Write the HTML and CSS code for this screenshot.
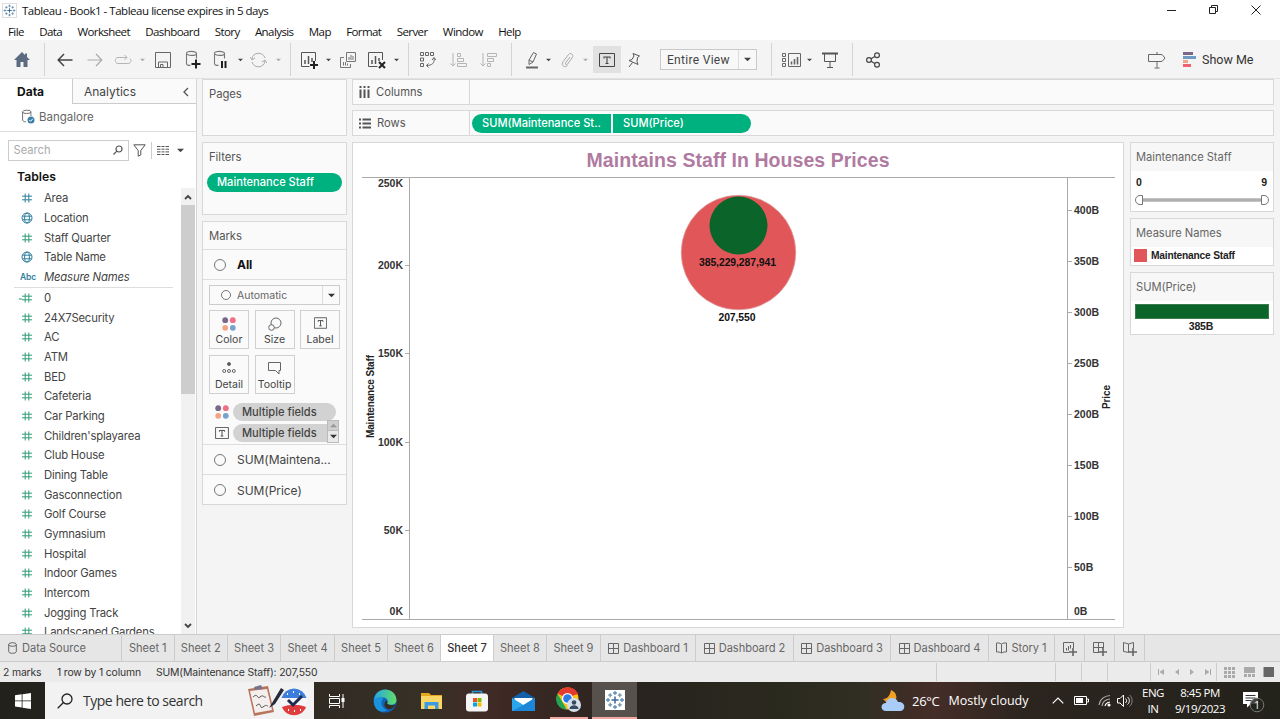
FILE: index.html
```html
<!DOCTYPE html>
<html lang="en">
<head>
<meta charset="utf-8">
<title>Tableau - Book1</title>
<link rel="stylesheet" href="styles.css">
</head>
<body>
<svg class="defs" aria-hidden="true">
  <symbol id="hash" viewBox="0 0 10 10"><path d="M3.2 .5v9M6.8 .5v9M0 3.2h10M0 6.8h10" fill="none" stroke="currentColor"/></symbol>
  <symbol id="globe" viewBox="0 0 12 12"><g fill="none" stroke="currentColor"><circle cx="6" cy="6" r="5"/><ellipse cx="6" cy="6" rx="2.4" ry="5"/><path d="M1.5 4.2h9M1.5 7.8h9"/></g></symbol>
  <symbol id="caret" viewBox="0 0 6 4"><path d="M0 .5h6L3 3.5z" fill="currentColor"/></symbol>
  <symbol id="db" viewBox="0 0 16 18"><g fill="none" stroke="currentColor" stroke-width="1.1"><ellipse cx="6.5" cy="3.4" rx="5" ry="2"/><path d="M1.5 3.4v10c0 1.2 2 2 4 2M11.5 3.4v5"/></g></symbol>
  <symbol id="tbox" viewBox="0 0 16 14"><path d="M.5 .5h15v13H.5z" fill="none" stroke="currentColor"/><path d="M5 5.5V4h6v1.5M8 4v6.5M6.5 10.5h3" fill="none" stroke="currentColor" stroke-width="1.1"/></symbol>
  <symbol id="dots" viewBox="0 0 14 14"><circle cx="3.2" cy="3.2" r="2.9" fill="#7b6888"/><circle cx="10.8" cy="3.2" r="2.9" fill="#ee6f86"/><circle cx="3.2" cy="10.8" r="2.9" fill="#f2a484"/><circle cx="10.8" cy="10.8" r="2.9" fill="#76a3cc"/></symbol>
  <symbol id="grid" viewBox="0 0 11 11"><path d="M.5 .5h10v10H.5zM5.5 .5v10M.5 5.5h10" fill="none" stroke="currentColor"/></symbol>
  <symbol id="book" viewBox="0 0 11 12"><path d="M5.5 2C4 1 2 .8.5 1v9c1.500-.2 3.500 0 5 1 1.500-1 3.500-1.200 5-1V1C9 .8 7 1 5.500 2zM5.500 2v9" fill="none" stroke="currentColor"/></symbol>
  <symbol id="logo" viewBox="0 0 20 20"><g fill="none" stroke-width="1.300"><path d="M10 6.500v7M6.500 10h7" stroke="#3d6796" stroke-width="1.500"/><path d="M10 1v4M8 3h4M10 15v4M8 17h4M1 10h4M3 8v4M15 10h4M17 8v4" stroke="#5c8db9"/><path d="M5.200 3.200v4M3.200 5.200h4M14.800 3.200v4M12.800 5.200h4M5.200 12.800v4M3.200 14.800h4M14.800 12.800v4M12.800 14.800h4" stroke="#7190aa"/></g></symbol>
</svg>

<header class="titlebar">
  <svg class="app-icon" width="15" height="15"><use href="#logo"/></svg>
  <span class="app-title">Tableau - Book1 - Tableau license expires in 5 days</span>
  <svg class="win-buttons" width="100" height="18" viewBox="0 0 100 18" fill="none" stroke="#222"><path d="M0 9.500h9" /><path d="M42.500 6.500h6v6h-6zM44.500 6.500v-2h6v6h-2"/><path d="M84.500 4.500l9 9M93.500 4.500l-9 9"/></svg>
</header>
<nav class="menu"><span>File</span><span>Data</span><span>Worksheet</span><span>Dashboard</span><span>Story</span><span>Analysis</span><span>Map</span><span>Format</span><span>Server</span><span>Window</span><span>Help</span></nav>

<div class="toolbar">
  <svg width="16" height="16" viewBox="0 0 16 16"><path d="M8 0L0 8h2.500v7H6.500v-5h3v5h4V8H16l-3-3V1.500h-2V3z" fill="#5d6b80"/></svg>
  <i class="sep"></i>
  <svg width="16" height="14" viewBox="0 0 16 14" fill="none" stroke="#444" stroke-width="1.500"><path d="M15.500 7H1.500M7 1L1.200 7 7 13"/></svg>
  <svg width="16" height="14" viewBox="0 0 16 14" fill="none" stroke="#aaa" stroke-width="1.200"><path d="M.5 7h14M9 1l5.800 6L9 13"/></svg>
  <svg width="18" height="12" viewBox="0 0 18 12" fill="none" stroke="#b5b5b5"><path d="M13 3.500H4C.5 3.500 .5 9.500 4 9.500h10c3.500 0 3.500-4 2-5M10.500 1L13 3.500 10.500 6"/></svg>
  <svg class="dim" width="5" height="4"><use href="#caret"/></svg>
  <svg width="16" height="16" viewBox="0 0 16 16" fill="none" stroke="#666"><path d="M.5 .5h15v15H.5zM3.500 15v-5h9v5M5.500 15v-2.500h2.500V15"/></svg>
  <svg class="mid" width="18" height="20" viewBox="0 0 18 20"><use href="#db" width="16" height="18" x="1"/><path d="M12 9.500v9M7.500 14h9" stroke="#222" stroke-width="2"/></svg>
  <svg class="mid" width="18" height="20" viewBox="0 0 18 20"><use href="#db" width="16" height="18" x="1"/><path d="M10 11v7M13.500 11v7" stroke="#222" stroke-width="2"/></svg>
  <svg width="5" height="4"><use href="#caret"/></svg>
  <svg width="17" height="16" viewBox="0 0 17 16" fill="none" stroke="#aaa"><path d="M2 7c.5-7 11-8 13-1M15 9c-.5 7-11 8-13 1M0 5l2 3 3-2M17 11l-2-3-3 2"/></svg>
  <svg class="dim" width="5" height="4"><use href="#caret"/></svg>
  <i class="sep"></i>
  <svg width="18" height="18" viewBox="0 0 18 18" fill="none" stroke="#555"><path d="M9.500 15.500H1.500V1.500h14V10"/><path d="M5 13V9M8.500 13V5M12 11V7" stroke-width="1.500"/><path d="M14 10v8M10 14h8" stroke="#222" stroke-width="2"/></svg>
  <svg width="5" height="4"><use href="#caret"/></svg>
  <svg width="18" height="18" viewBox="0 0 18 18" fill="none" stroke="#777"><path d="M7.500 1.500h9v9h-9zM5 6.500H1.500v10h10V13M10 9V6M12 9V4M14 9V5M4.500 14.500V11M6.500 14.500V11M8.500 14.500V12.500"/></svg>
  <svg width="18" height="18" viewBox="0 0 18 18" fill="none" stroke="#555"><path d="M9.500 15.500H.5V1.500h14V9"/><path d="M4 13V9M7.500 13V5M11 10V7" stroke-width="1.500"/><path d="M11 11l6 6M17 11l-6 6" stroke="#222" stroke-width="2"/></svg>
  <svg width="5" height="4"><use href="#caret"/></svg>
  <i class="sep"></i>
  <svg width="16" height="16" viewBox="0 0 16 16" fill="none" stroke="#666"><path d="M.5 .5h3v3h-3zM5.500 .5h3v3h-3zM10.500 .5h3v3h-3zM.5 6h3v3h-3zM.5 11.500h3v3h-3zM14 6c1 5-2 7.500-7.500 7.500M12 8l2-2.500L16 8M8.500 11.500l-2 2 2 2"/></svg>
  <svg width="18" height="16" viewBox="0 0 18 16" fill="none" stroke="#b5b5b5"><path d="M3 1v13M.5 11.500L3 14l2.500-2.500M7.500 1.500h3v3h-3zM7.500 6.500h6v3h-6zM7.500 11.500h9v3h-9z"/></svg>
  <svg width="18" height="16" viewBox="0 0 18 16" fill="none" stroke="#b5b5b5"><path d="M3 1v13M.5 11.500L3 14l2.500-2.500M7.500 1.500h9v3h-9zM7.500 6.500h6v3h-6zM7.500 11.500h3v3h-3z"/></svg>
  <i class="sep"></i>
  <svg width="14" height="18" viewBox="0 0 14 18" fill="none" stroke="#666"><path d="M4 9L8.500 1.500l3 1.500L8 11l-4 2.500zM4 9l4 2"/><path d="M1 16.500h12" stroke-width="2"/></svg>
  <svg width="5" height="4"><use href="#caret"/></svg>
  <svg width="13" height="16" viewBox="0 0 13 16" fill="none" stroke="#aaa"><path d="M9 5l-4.500 6c-.8 1.500 1 2.500 2 1.200l4.800-6.700C13 2.500 9.500 0 7.500 2.500L2 9.800C-.5 13.500 4 16.500 6.500 13.500"/></svg>
  <svg class="dim" width="5" height="4"><use href="#caret"/></svg>
  <span class="pressed"><svg width="16" height="14"><use href="#tbox"/></svg></span>
  <svg width="14" height="16" viewBox="0 0 14 16" fill="none" stroke="#555"><path d="M6 1.500l6.500 2.500-2 1.500-.5 4 1 3L2 8.500l3-1L7 4zM5.500 10.500L2 15"/></svg>
  <span class="fit-select"><span>Entire View</span><i></i><svg width="7" height="5"><use href="#caret"/></svg></span>
  <i class="sep"></i>
  <i></i>
  <svg width="20" height="16" viewBox="0 0 20 16" fill="none" stroke="#666"><path d="M.5 1.500h3v3h-3zM.5 6.500h3v3h-3zM.5 11.500h3v3h-3zM6.500 1.500h12v13h-12z"/><path d="M9.500 12.500v-3M12.500 12.500V7M15.500 12.500V5" stroke-width="1.600"/></svg>
  <svg width="5" height="4"><use href="#caret"/></svg>
  <svg width="16" height="16" viewBox="0 0 16 16" fill="none" stroke="#555"><path d="M0 1.500h16" stroke-width="2"/><path d="M2.500 2v7.500h11V2M8 9.500v5.500M5 15.500h6"/></svg>
  <i class="sep"></i>
  <svg width="14" height="16" viewBox="0 0 14 16" fill="none" stroke="#444" stroke-width="1.200"><circle cx="3" cy="8" r="2.400"/><circle cx="11" cy="3.200" r="2.400"/><circle cx="11" cy="12.800" r="2.400"/><path d="M5 6.800l3.800-2.400M5 9.200l3.800 2.400"/></svg>
  <i></i>
  <svg width="18" height="18" viewBox="0 0 18 18" fill="none" stroke="#666"><path d="M.5 3.500H14l3 3.500-3 3.500H.5zM9 1v2.500M9 10.500v6M6.500 17h5"/></svg>
  <span class="show-me"><svg width="14" height="15" viewBox="0 0 14 15"><path d="M0 0h10v3H0z" fill="#7b6888"/><path d="M0 4h13v3H0z" fill="#6f9bc4"/><path d="M0 8h5v3H0z" fill="#f2a484"/><path d="M0 12h8v3H0z" fill="#f0616d"/></svg><span>Show Me</span></span>
</div>

<main class="workspace">
  <aside class="data-pane">
    <div class="pane-tabs"><b>Data</b><span>Analytics</span><svg width="6" height="10" viewBox="0 0 6 10" fill="none" stroke="#555" stroke-width="1.300"><path d="M5 1L1 5l4 4"/></svg></div>
    <div class="source"><svg width="16" height="16" viewBox="0 0 16 16"><use href="#db" width="14" height="15"/><circle cx="10" cy="11" r="3.500" fill="#3b7ea6"/><path d="M8.300 11l1.300 1.300 2.200-2.600" fill="none" stroke="#fff"/></svg><span>Bangalore</span></div>
    <div class="find">
      <span class="search"><span>Search</span><svg width="10" height="10" viewBox="0 0 10 10" fill="none" stroke="#555" stroke-width="1.200"><circle cx="6" cy="4" r="3"/><path d="M3.800 6.200L.5 9.500"/></svg></span>
      <svg width="13" height="13" viewBox="0 0 13 13" fill="none" stroke="#555"><path d="M.8 .8h11.400L7.800 6.500v4.500l-2.600 1.200V6.500z"/></svg>
      <i></i>
      <svg width="12" height="9" viewBox="0 0 12 9" stroke="#555"><path d="M0 .5h12M0 3.200h12M0 5.900h12M0 8.500h12" stroke-dasharray="3.500 1 3 1 3.500 0"/></svg>
      <svg width="7" height="5"><use href="#caret"/></svg>
    </div>
    <h2>Tables</h2>
    <div class="fields">
      <ul>
        <li class="dim-f"><svg><use href="#hash"/></svg>Area</li>
        <li class="dim-f geo"><svg><use href="#globe"/></svg>Location</li>
        <li><svg><use href="#hash"/></svg>Staff Quarter</li>
        <li class="dim-f geo"><svg><use href="#globe"/></svg>Table Name</li>
        <li class="names"><b>Abc</b><em>Measure Names</em></li>
        <li class="calc"><svg><use href="#hash"/></svg>0</li>
        <li><svg><use href="#hash"/></svg>24X7Security</li>
        <li><svg><use href="#hash"/></svg>AC</li>
        <li><svg><use href="#hash"/></svg>ATM</li>
        <li><svg><use href="#hash"/></svg>BED</li>
        <li><svg><use href="#hash"/></svg>Cafeteria</li>
        <li><svg><use href="#hash"/></svg>Car Parking</li>
        <li><svg><use href="#hash"/></svg>Children'splayarea</li>
        <li><svg><use href="#hash"/></svg>Club House</li>
        <li><svg><use href="#hash"/></svg>Dining Table</li>
        <li><svg><use href="#hash"/></svg>Gasconnection</li>
        <li><svg><use href="#hash"/></svg>Golf Course</li>
        <li><svg><use href="#hash"/></svg>Gymnasium</li>
        <li><svg><use href="#hash"/></svg>Hospital</li>
        <li><svg><use href="#hash"/></svg>Indoor Games</li>
        <li><svg><use href="#hash"/></svg>Intercom</li>
        <li><svg><use href="#hash"/></svg>Jogging Track</li>
        <li><svg><use href="#hash"/></svg>Landscaped Gardens</li>
      </ul>
      <div class="scroll"><svg width="8" height="6" viewBox="0 0 8 6" fill="none" stroke="#444" stroke-width="1.800"><path d="M1 5l3-3 3 3"/></svg><i></i><svg width="8" height="6" viewBox="0 0 8 6" fill="none" stroke="#444" stroke-width="1.800"><path d="M1 1l3 3 3-3"/></svg></div>
    </div>
  </aside>

  <section class="cards">
    <div class="card pages"><h3>Pages</h3></div>
    <div class="card filters"><h3>Filters</h3><span class="pill">Maintenance Staff</span></div>
    <div class="card marks">
      <h3>Marks</h3>
      <div class="mark-row all"><i class="ring"></i><b>All</b></div>
      <div class="mark-body">
        <div class="mark-type"><i class="ring small"></i><span>Automatic</span><i class="drop"><svg width="7" height="5"><use href="#caret"/></svg></i></div>
        <div class="encodings">
          <div><svg width="14" height="14"><use href="#dots"/></svg><span>Color</span></div>
          <div><svg width="14" height="14" viewBox="0 0 14 14" fill="none" stroke="#666"><circle cx="8" cy="6" r="5"/><circle cx="3.500" cy="10.500" r="2.800" fill="#fafafa"/></svg><span>Size</span></div>
          <div><svg width="13" height="12"><use href="#tbox"/></svg><span>Label</span></div>
          <div><svg width="14" height="12" viewBox="0 0 14 12" fill="none" stroke="#666"><circle cx="7" cy="2" r="1.500" fill="#555"/><circle cx="2.200" cy="9" r="1.500"/><circle cx="7" cy="9" r="1.500"/><circle cx="11.800" cy="9" r="1.500"/></svg><span>Detail</span></div>
          <div><svg width="14" height="13" viewBox="0 0 14 13" fill="none" stroke="#666"><path d="M.5 .5h12v8h-1.500v3.500L7.500 8.500h-7z"/></svg><span>Tooltip</span></div>
        </div>
        <div class="used"><svg width="14" height="14"><use href="#dots"/></svg><span>Multiple fields</span></div>
        <div class="used"><svg width="13" height="12"><use href="#tbox"/></svg><span>Multiple fields</span>
          <div class="stepper"><i><svg width="7" height="5" viewBox="0 0 6 4"><path d="M0 3.500h6L3 .5z" fill="#999"/></svg></i><i><svg width="7" height="5"><use href="#caret"/></svg></i></div></div>
      </div>
      <div class="mark-row"><i class="ring"></i><span>SUM(Maintena...</span></div>
      <div class="mark-row"><i class="ring"></i><span>SUM(Price)</span></div>
    </div>
  </section>

  <section class="view">
    <div class="shelf"><label><svg width="11" height="12" viewBox="0 0 11 12" stroke="#555" stroke-width="2"><path d="M1.500 0v2M5.500 0v2M9.500 0v2M1.500 3.500V12M5.500 3.500V12M9.500 3.500V12"/></svg>Columns</label></div>
    <div class="shelf rows"><label><svg width="12" height="11" viewBox="0 0 12 11" stroke="#555" stroke-width="2"><path d="M0 1.500h2M0 5.500h2M0 9.500h2M3.500 1.500H12M3.500 5.500H12M3.500 9.500H12"/></svg>Rows</label><span class="pill first">SUM(Maintenance St..</span><span class="pill last">SUM(Price)</span></div>
    <div class="stage">
      <svg class="viz" width="772" height="486" viewBox="352 142 772 486">
        <text class="viz-title" x="738" y="167" text-anchor="middle" textLength="303">Maintains Staff In Houses Prices</text>
        <path d="M362 177.500H1115M362 619.500H1115M409.500 178v441M1067.500 178v441" stroke="#aaa"/>
        <path d="M405 265.500h5M405 353.500h5M405 442.500h5M405 530.500h5M1067 210.500h5M1067 261.500h5M1067 312.500h5M1067 363.500h5M1067 414.500h5M1067 465.500h5M1067 516.500h5M1067 567.500h5" stroke="#aaa"/>
        <g class="tick" text-anchor="end"><text x="403" y="187">250K</text><text x="403" y="269">200K</text><text x="403" y="357">150K</text><text x="403" y="446">100K</text><text x="403" y="534">50K</text><text x="403" y="615">0K</text></g>
        <g class="tick"><text x="1074" y="214">400B</text><text x="1074" y="265">350B</text><text x="1074" y="316">300B</text><text x="1074" y="367">250B</text><text x="1074" y="418">200B</text><text x="1074" y="469">150B</text><text x="1074" y="520">100B</text><text x="1074" y="571">50B</text><text x="1074" y="615">0B</text></g>
        <text class="axis" text-anchor="middle" transform="translate(374 396.500) rotate(-90)" textLength="83">Maintenance Staff</text>
        <text class="axis" text-anchor="middle" transform="translate(1109.500 397) rotate(-90)" textLength="24">Price</text>
        <circle cx="738.500" cy="252.500" r="57.300" fill="#e15759" stroke="#dba5a5" stroke-width=".7"/>
        <circle cx="738.500" cy="225.500" r="29" fill="#0b652b"/>
        <text class="mark" x="737.500" y="266" text-anchor="middle" textLength="77">385,229,287,941</text>
        <text class="mark" x="737" y="321" text-anchor="middle" textLength="37">207,550</text>
      </svg>
      <div class="legends">
        <div class="card range"><h3>Maintenance Staff</h3><div class="ends"><b>0</b><b>9</b></div>
          <svg width="136" height="12" viewBox="0 0 136 12"><path d="M8 6h119" stroke="#b0b0b0" stroke-width="3.500"/><path d="M8.500 1.500v9H6c-6 0-6-9 0-9zM127.500 1.500v9h2.500c6 0 6-9 0-9z" fill="#fff" stroke="#777"/></svg></div>
        <div class="card names-legend"><h3>Measure Names</h3><div class="key"><i></i><b>Maintenance Staff</b></div></div>
        <div class="card ramp"><h3>SUM(Price)</h3><i></i><b>385B</b></div>
      </div>
    </div>
  </section>
</main>

<nav class="sheets">
  <span class="ds"><svg width="9" height="12" viewBox="0 0 9 12" fill="none" stroke="currentColor"><ellipse cx="4.500" cy="2.500" rx="3.800" ry="1.800"/><path d="M.7 2.500v7c0 2.400 7.600 2.400 7.600 0v-7"/></svg>Data Source</span>
  <span>Sheet 1</span><span>Sheet 2</span><span>Sheet 3</span><span>Sheet 4</span><span>Sheet 5</span><span>Sheet 6</span><span class="active">Sheet 7</span><span>Sheet 8</span><span>Sheet 9</span>
  <span><svg width="11" height="11"><use href="#grid"/></svg>Dashboard 1</span><span><svg width="11" height="11"><use href="#grid"/></svg>Dashboard 2</span><span><svg width="11" height="11"><use href="#grid"/></svg>Dashboard 3</span><span><svg width="11" height="11"><use href="#grid"/></svg>Dashboard 4</span>
  <span><svg width="11" height="12"><use href="#book"/></svg>Story 1</span>
  <span><svg width="15" height="15" viewBox="0 0 15 15" fill="none" stroke="#666"><path d="M7 11.500H1.500v-10h10V7M4.500 9.500V7M6.500 9.500V5M8.500 7.500V4"/><path d="M11 7v8M7 11h8" stroke-width="1.600"/></svg></span>
  <span><svg width="15" height="15" viewBox="0 0 15 15" fill="none" stroke="#666"><path d="M7 11.500H1.500v-10h10V7M6.500 1.500v10M1.500 6.500h10"/><path d="M11 7v8M7 11h8" stroke-width="1.600"/></svg></span>
  <span><svg width="15" height="15" viewBox="0 0 15 15" fill="none" stroke="#666"><path d="M7 11.500L1.500 10.500v-9L6.500 3l5-1.500V7M6.500 3v8"/><path d="M11 7v8M7 11h8" stroke-width="1.600"/></svg></span>
  <i></i>
</nav>
<div class="status">
  <span class="s1">2 marks</span><span class="s2">1 row by 1 column</span><span class="s3">SUM(Maintenance Staff): 207,550</span>
  <i></i><i></i><i></i><i></i>
  <span class="nav-arrows"><svg width="54" height="8" viewBox="0 0 54 8" fill="#aaa"><path d="M0 1h1v6H0zM6 1v6L1.500 4zM21 1v6l-4-3zM32 1v6l4-3zM47 1v6l4.500-3zM52 1h1v6h-1z"/></svg></span>
  <svg width="52" height="11" viewBox="0 0 52 11"><path d="M0 1.500h11M0 5.500h11M0 9.500h11" stroke="#aaa" stroke-width="3" stroke-dasharray="3 1"/><path d="M20 0h11v6H20z" fill="#aaa"/><path d="M20 8.500h11" stroke="#aaa" stroke-width="3" stroke-dasharray="3 1"/><path d="M39.500 0h10.500v10H39.500z" fill="#666"/></svg>
</div>

<footer class="taskbar">
  <span class="start"><svg width="16" height="16" viewBox="0 0 16 16" fill="#fff"><path d="M0 2.200L6.700 1.300v6.200H0zM7.500 1.200L16 0v7.500H7.500zM0 8.300h6.700v6.200L0 13.600zM7.500 8.300H16V16l-8.500-1.200z"/></svg></span>
  <div class="find-box"><svg width="16" height="16" viewBox="0 0 16 16" fill="none" stroke="#222" stroke-width="1.300"><circle cx="10" cy="6" r="5"/><path d="M6.500 9.500L.7 15.300"/></svg><span>Type here to search</span>
    <svg class="doodle" width="62" height="36" viewBox="0 0 62 36"><path d="M1 6l20-3 6 26-20 4z" fill="#b9755c"/><path d="M3 8l17-2 5 21-17 3z" fill="#f4efed"/><path d="M7 4l7-2 2 4-8 1z" fill="#77758d"/><path d="M6 14c5-5 4 3 7 0s4 1 6 0M9 23c6-6 3 4 7 1s3-1 5-1" fill="none" stroke="#555"/><path d="M22 25l3-5L34 5l3 2-9 14z" fill="#272a38"/><circle cx="47" cy="19" r="13" fill="#f5f5fa"/><path d="M34.500 15a13 13 0 0 1 25 0z" fill="#3d7edc"/><path d="M35 24c8-3 16-3 24 0-4 11-20 11-24 0z" fill="#df3c3e"/><path d="M41 17l5 5 9-9" fill="none" stroke="#202b50" stroke-width="3"/><path d="M40 11h1M46 9h1M52 11h1M41 27h1M47 28h1M53 27h1" stroke="#fff" stroke-width="2"/></svg>
  </div>
  <span><svg width="16" height="16" viewBox="0 0 16 16" fill="none" stroke="#fff"><path d="M.5 1v2.500h10V1M.5 15v-2.500h10V15M.5 5.500h10v5H.5zM14 1v14"/><path d="M14 5v4" stroke-width="3"/></svg></span>
  <span><svg width="24" height="24" viewBox="0 0 24 24"><defs><linearGradient id="e1" x1="0" x2="1"><stop stop-color="#26a7e3"/><stop offset="1" stop-color="#62dc69"/></linearGradient></defs><circle cx="12" cy="12" r="11.500" fill="#1263b5"/><path d="M1 11C3-4 23-2 23.500 11c0 6-8 5.500-9.500 3.500 2-2 0-6-4-6S3 9 1 11z" fill="url(#e1)"/><path d="M1 11c3-4 9-3 9-1-3 3-2 9 4 11-8 5-14-3-13-10z" fill="#1b93dc"/><path d="M14 14.500c2 2 6.500 2 8.500 1-2 5-8 6-10 3s-1-5 1-7c1 1 1 2 .5 3z" fill="#322e27"/></svg></span>
  <span><svg width="21" height="18" viewBox="0 0 21 18"><path d="M0 1h8l2 2h11v14H0z" fill="#e5a91b"/><path d="M0 4h21v13H0z" fill="#fbd566"/><path d="M3.500 10h14v7h-3.500v-3.500H7V17H3.500z" fill="#3b9be0"/></svg></span>
  <span><svg width="22" height="24" viewBox="0 0 22 24"><path d="M6.500 6V2.500h9V6" fill="none" stroke="#2996d8" stroke-width="1.500"/><rect y="4.500" width="22" height="18" rx="3" fill="#f5f5f5"/><path d="M7 9h4v4H7z" fill="#f25022"/><path d="M11.500 9h4v4h-4z" fill="#7fba00"/><path d="M7 13.500h4v4H7z" fill="#00a4ef"/><path d="M11.500 13.500h4v4h-4z" fill="#ffb900"/></svg></span>
  <span><svg width="23" height="22" viewBox="0 0 23 22"><path d="M0 8l11.500-7L23 8v13H0z" fill="#1260a8"/><path d="M2.500 8h18v7h-18z" fill="#fff"/><path d="M0 8l11.500 7L23 8v13H0z" fill="#2aa6ec"/><path d="M0 21l11.500-6L23 8v13z" fill="#1c86d8"/></svg></span>
  <span class="open"><svg width="25" height="25" viewBox="0 0 25 25"><circle cx="11.500" cy="11.500" r="11" fill="#fbc116"/><path d="M11.500 11.500L1.500 6.500C6-2 18-2 21.500 6.500z" fill="#e33b2e"/><path d="M1.500 6.500L9 19.500l1.500 3C1 22-1.500 13 1.500 6.500z" fill="#23a455"/><path d="M11.500 6.500h10.300" stroke="#e33b2e" stroke-width="2"/><circle cx="11.500" cy="11.500" r="5.500" fill="#fff"/><circle cx="11.500" cy="11.500" r="4.300" fill="#2e79e7"/><circle cx="18" cy="18" r="7" fill="#d5dfea"/><circle cx="18" cy="15.500" r="2.300" fill="#394960"/><path d="M13.500 22c0-5 9-5 9 0z" fill="#394960"/></svg></span>
  <span class="open current"><svg class="tile" width="20" height="20"><use href="#logo"/></svg></span>
  <i></i>
  <span class="weather"><svg width="24" height="22" viewBox="0 0 24 22"><path d="M2 9c4 0 7-3 8-9 5 2 7 7 4 12H5z" fill="#f2a022"/><path d="M5 21c-6 0-6-8 0-8 1-6 10-7 12-1 8-1 8 9 2 9z" fill="#a9cdf8"/></svg><span class="deg">26°C</span><span class="sky">Mostly cloudy</span></span>
  <svg width="12" height="7" viewBox="0 0 12 7" fill="none" stroke="#fff" stroke-width="1.200"><path d="M.7 6.300L6 1l5.300 5.300"/></svg>
  <svg width="15" height="10" viewBox="0 0 15 10"><path d="M.5 .5h12v8H.5zM13 3h1.500v3H13" fill="none" stroke="#fff"/><path d="M2 2h7v5H2z" fill="#fff"/></svg>
  <svg width="13" height="13" viewBox="0 0 13 13" fill="none" stroke="#aaa" stroke-width="1.200"><path d="M1 11C2 5 6 2 12 1.500M4 12c.5-4 3-6.500 8-7"/><path d="M7 12c.5-2 2-3.500 5-4" stroke="#fff"/><circle cx="11" cy="11" r="1" fill="#fff" stroke="#fff"/></svg>
  <svg width="16" height="14" viewBox="0 0 16 14" fill="none" stroke="#fff"><path d="M.5 4.500h2.500L6.500 1v11.500L3 9H.5zM8.500 4.500c1.500 1.500 1.500 3 0 4.500M10.500 3c2.500 2 2.500 5.500 0 7.500"/><path d="M12.500 1c3.500 3 3.500 8.500 0 11.500" stroke="#888"/></svg>
  <span class="lang">ENG<br>IN</span>
  <span class="clock">8:45 PM<br>9/19/2023</span>
  <svg class="note" width="24" height="24" viewBox="0 0 24 24"><path d="M1 3h15v12h-7l-4 3.500V15H1z" fill="#fff"/><path d="M3.500 6.500h10M3.500 9h10M3.500 11.500h6" stroke="#333"/><circle cx="15" cy="16" r="6.800" fill="#25241f" fill-opacity=".85" stroke="#777"/><text x="15" y="20" text-anchor="middle" fill="#fff" font-size="10.500">1</text></svg>
</footer>
</body>
</html>
```
FILE: styles.css
```css
* { box-sizing: border-box; }
body { margin: 0; width: 1280px; height: 719px; overflow: hidden; display: flex; flex-direction: column; background: #f4f4f4; color: #444; font: 11.5px Inter, "Open Sans", sans-serif; white-space: nowrap; }
h2, h3 { margin: 0; font-weight: 400; }
ul { margin: 0; padding: 0; list-style: none; }
svg { flex: none; display: block; }
.defs { position: absolute; width: 0; height: 0; }

.titlebar { height: 22px; flex: none; background: #fff; color: #111; display: flex; align-items: center; padding: 0 0 2px 2px; font: 11.5px "Open Sans", sans-serif; }
.app-icon { border: 1px solid #ddd; }
.app-title { margin-left: 5px; letter-spacing: -.47px; }
.win-buttons { margin-left: auto; margin-right: 13px; }
.menu { height: 18px; flex: none; background: #fff; color: #111; display: flex; gap: 15.300px; padding-left: 8px; font: 11.5px/19px "Open Sans", sans-serif; letter-spacing: -.58px; }

.toolbar { height: 39px; flex: none; display: grid; align-items: center; justify-items: center; padding-top: 1px; color: #444; border-bottom: 1px solid #e2e2e2;
  grid-template-columns: 44px 1px 40px 20px 36px 2px 40px 20px 36px 2px 34px 6px 18px 20px 18px 22px 36px 2px 22px 18px 44px 16px 28px 14px 18px 20px 17px 26px 28px 121px 4px 4px 30px 4px 38px 6px 36px 256px 20px 113px; }
.sep { width: 1px; height: 33px; background: #d4d4d4; }
.dim { color: #aaa; }
.mid { color: #777; }
.pressed { width: 28px; height: 27px; background: #e1e1e1; display: grid; place-items: center; }
.fit-select { width: 97px; height: 21px; border: 1px solid #c9c9c9; background: #f8f8f8; display: flex; align-items: center; padding: 0 5px 0 6px; font: 12px Roboto, sans-serif; letter-spacing: .3px; }
.fit-select i { width: 1px; height: 19px; background: #ddd; margin-left: auto; margin-right: 5px; }
.show-me { justify-self: start; padding-left: 16px; display: flex; gap: 5px; align-items: center; font: 12.500px Roboto, sans-serif; color: #333; }

.workspace { height: 555px; flex: none; display: flex; }
.data-pane { width: 197px; background: #fff; border-right: 1px solid #d4d4d4; display: flex; flex-direction: column; }
.pane-tabs { height: 25px; flex: none; display: flex; align-items: center; color: #444; }
.pane-tabs b { width: 72px; padding-left: 17px; color: #111; font-size: 12px; }
.pane-tabs span { width: 124px; align-self: stretch; border-left: 1px solid #ccc; border-bottom: 1px solid #ccc; padding-left: 11px; line-height: 25px; font-size: 12px; background: #fafafa; }
.pane-tabs svg { margin-left: -13px; }
.source { height: 28px; flex: none; border-bottom: 1px solid #ddd; display: flex; align-items: center; gap: 2px; padding: 0 0 1px 21px; color: #666; font-size: 11.500px; }
.find { height: 35px; flex: none; display: flex; align-items: center; padding: 1px 0 0 7.500px; }
.search { width: 121px; height: 21px; border: 1px solid #ccc; display: flex; justify-content: space-between; align-items: center; padding: 0 5px; color: #aaa; margin-right: 4px; font-size: 11.200px; }
.find i { width: 1px; height: 17px; background: #ccc; margin: 0 5px 0 5px; }
.find svg + svg { margin-left: 8px; }
.data-pane h2 { height: 21px; flex: none; padding-left: 17px; font-size: 12.200px; font-weight: 600; line-height: 20px; color: #111; }
.fields { flex: 1; min-height: 0; display: flex; justify-content: space-between; overflow: hidden; }
.fields li { height: 19.680px; display: flex; align-items: center; padding: 1px 0 0 22px; color: #444; font-size: 11.300px; letter-spacing: -.18px; }
.fields svg { width: 10px; height: 10px; }
.fields li > svg { color: #2f9c78; margin-right: 12px; }
.fields .dim-f > svg { color: #2f7f9e; }
.fields .geo > svg { width: 12px; height: 12px; margin: 0 11px 0 -1px; }
.fields .names { height: 21px; width: 159px; margin-left: 14px; border-bottom: 1px solid #ddd; padding-left: 6px; }
.names b { width: 24px; font-size: 8.500px; color: #2f7f9e; font-weight: 600; }
.fields .calc::before { content: "="; margin-left: -4px; width: 4px; font-size: 7px; color: #2f9c78; }
.scroll { width: 14px; background: #f1f1f1; display: flex; flex-direction: column; align-items: center; padding: 6px 0 5px; margin-right: 1px; }
.scroll i { width: 14px; height: 189px; background: #cdcdcd; margin: 5px 0 auto; }
.scroll svg { width: 8px; height: 6px; }

.cards { width: 145px; margin-left: 5px; display: flex; flex-direction: column; gap: 6px; }
.card { background: #fafafa; border: 1px solid #d8d8d8; }
.card h3 { color: #555; font-size: 11.300px; line-height: 14px; padding: 7px 0 0 6px; letter-spacing: -.05px; }
.pages { height: 57px; }
.filters { height: 73px; }
.pill { display: block; background: #00b180; color: #fff; height: 19px; line-height: 19px; border-radius: 10px; padding-left: 10px; font-weight: 500; font-size: 11.100px; }
.filters .pill { margin: 9px 4px 0; }
.marks { height: 284px; }
.marks h3 { height: 28px; border-bottom: 1px solid #ddd; }
.mark-row { height: 30px; display: flex; align-items: center; padding-left: 11px; font-size: 12px; color: #444; border-bottom: 1px solid #ddd; letter-spacing: -.05px; }
.mark-row:last-child { border: 0; }
.mark-row b { color: #111; }
.ring { width: 12px; height: 12px; border: 1.500px solid #777; border-radius: 50%; margin-right: 11px; }
.ring.small { width: 10px; height: 10px; margin-right: 6px; border: 1px solid #777; }
.mark-body { height: 165px; padding: 5px 6px 0; border-bottom: 1px solid #ddd; }
.mark-type { height: 20px; border: 1px solid #ccc; display: flex; align-items: center; padding-left: 11px; font-size: 10.500px; color: #666; }
.drop { margin-left: auto; width: 17px; height: 18px; border-left: 1px solid #ddd; display: grid; place-items: center; color: #333; }
.encodings { display: grid; grid-template-columns: repeat(3, 40px); gap: 6px 5.500px; margin-top: 5px; }
.encodings div { height: 39px; border: 1px solid #d0d0d0; display: flex; flex-direction: column; align-items: center; justify-content: space-between; padding: 6px 0 1px; font-size: 10.500px; line-height: 14px; }
.used { height: 21.500px; display: flex; align-items: center; padding-left: 6px; gap: 4px; position: relative; }
.encodings + .used { margin-top: 7px; }
.used > svg { width: 14px; }
.used > span { width: 103px; height: 18px; border-radius: 9px; background: #d2d2d2; padding-left: 9px; line-height: 18px; font-size: 11.100px; font-weight: 500; }
.stepper { position: absolute; right: 1px; top: -3px; width: 12px; height: 23px; background: #e9e9e9; border: 1px solid #bbb; display: grid; grid-template-rows: 1fr 1fr; color: #333; }
.stepper i { display: grid; place-items: center; }
.stepper i:first-child { background: #cfcfcf; border-bottom: 1px solid #bbb; }

.view { width: 922px; margin-left: 5px; display: flex; flex-direction: column; }
.shelf { height: 26px; flex: none; border: 1px solid #d8d8d8; background: #fafafa; display: flex; align-items: center; margin-bottom: 5px; }
.shelf label { width: 117px; height: 24px; border-right: 1px solid #d8d8d8; padding-left: 6px; display: flex; align-items: center; gap: 6px; color: #555; font-size: 11.200px; }
.shelf.rows { height: 26px; margin-bottom: 6px; }
.shelf .first { width: 139px; margin-left: 2px; border-radius: 10px 0 0 10px; }
.shelf .last { width: 138px; margin-left: 2px; border-radius: 0 10px 10px 0; }
.stage { display: flex; gap: 6px; }
.viz { background: #fff; outline: 1px solid #d8d8d8; outline-offset: -1px; font-family: "Liberation Sans", sans-serif; font-weight: 700; }
.viz-title { font-size: 19.500px; fill: #b07aa1; }
.tick { font-size: 10.500px; fill: #333; }
.axis { font-size: 10px; fill: #222; }
.mark { font-size: 10.400px; fill: #111; }
.legends { width: 144px; display: flex; flex-direction: column; gap: 6px; font: 700 10.500px "Liberation Sans", sans-serif; color: #222; }
.legends .card { background: #fff; }
.legends h3 { height: 28px; background: #f7f7f7; font-family: Inter, sans-serif; color: #666; font-size: 11.200px; padding-left: 5px; }
.range { height: 70px; }
.ends { display: flex; justify-content: space-between; padding: 5px 6px 0 5px; line-height: 12px; }
.range svg { margin: 6px 0 0 3px; }
.names-legend { height: 48px; }
.key { display: flex; align-items: center; gap: 4px; padding: 2px 3px; font-size: 10.200px; letter-spacing: -.2px; }
.key i { width: 13px; height: 13px; background: #e15759; }
.ramp { height: 63px; }
.ramp i { display: block; height: 15px; margin: 3px 4px 4px; background: #0b652b; border: 1px solid #3b7b50; }
.ramp b { display: block; text-align: center; margin-top: -3px; line-height: 12px; letter-spacing: -.2px; padding-right: 2px; }

.sheets { height: 28px; flex: none; border-top: 1px solid #ccc; border-bottom: 1px solid #ccc; background: #e6e6e6; color: #666; display: grid; grid-template-columns: 122px 52.500px 53.500px 53px 54px 53px 53px 53px 53px 54px 95px 98px 97px 98px 66px 30px 30px 30px 1fr; font-size: 11.100px; letter-spacing: -.05px; }
.sheets span { border-right: 1px solid #ccc; display: flex; align-items: center; justify-content: center; gap: 4px; }
.sheets .ds { justify-content: flex-start; padding-left: 8px; gap: 5px; }
.sheets .active { background: #fff; color: #333; font-weight: 500; }
.status { height: 20px; flex: none; background: #ebebeb; display: grid; grid-template-columns: 54px 99px 783px 119px 26px 26px 43px 0 67px 1fr; align-items: center; font-size: 10.400px; color: #333; letter-spacing: -.15px; }
.status span { padding-left: 3px; }
.status i { border-left: 1px solid #ccc; height: 18px; }
.status .nav-arrows { grid-column: 8 / 10; border-left: 1px solid #ccc; border-right: 1px solid #ccc; padding-left: 7px; height: 18px; display: flex; align-items: center; }
.status > svg { margin-left: 7px; }

.taskbar { height: 37px; flex: none; color: #fff; font: 12px "Open Sans", sans-serif; background: linear-gradient(90deg, #22211c 0, #302b23 25%, #373026 33%, #402a25 38%, #28231f 50%, #2a291e 60%, #302e22 67%, #452d28 73%, #2c251f 80%, #23221b 100%); display: grid; align-items: center; justify-items: center; grid-template-columns: 45px 269px 46px 50px 42px 49px 44px 47px 45px 1fr 165px 24px 22px 24px 18px 38px 56px 52px; }
.find-box { width: 269px; height: 37px; background: #f2f2f2; color: #333; display: flex; align-items: center; padding-left: 12px; gap: 10px; font-size: 14px; letter-spacing: -.48px; }
.find-box .doodle { margin-left: auto; margin-right: 5px; }
.open { width: 38px; height: 37px; border-bottom: 2px solid #f0a8a0; display: grid; place-items: center; }
.current { width: 45px; background: #56514d; }
.tile { background: #fff; }
.weather { justify-self: start; display: flex; align-items: center; gap: 7px; font-size: 13px; letter-spacing: -.3px; }
.sky { margin-left: 2px; font-size: 12.500px; letter-spacing: 0; }
.lang, .clock { text-align: center; font-size: 11.500px; line-height: 16px; letter-spacing: -.5px; }
```
